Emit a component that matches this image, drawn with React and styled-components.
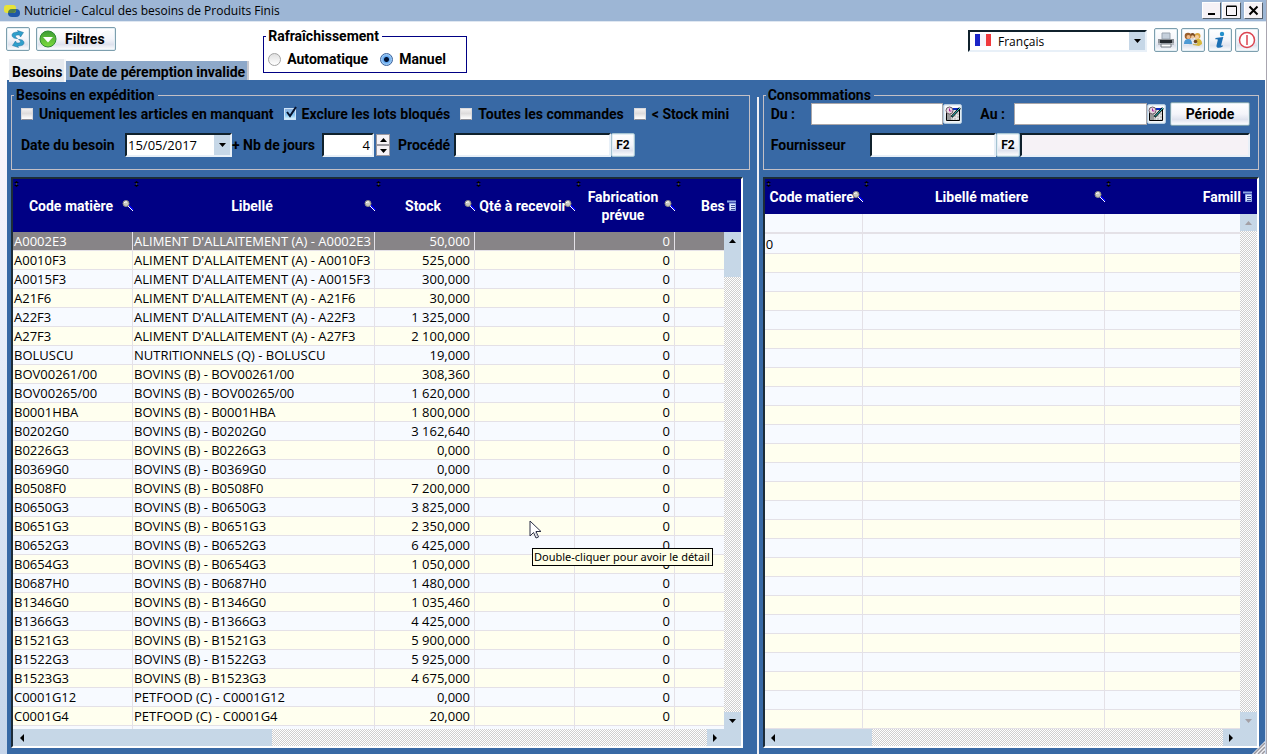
import React from "react";
import styled, { createGlobalStyle, css } from "styled-components";

const blue = "#3869a5";
const navy = "#000084";
const face = "#c6d7e7";

const Global = createGlobalStyle`
  *, *::before, *::after { box-sizing: border-box; }
  body { margin: 0; background: #fff; overflow: hidden; }
  body, button, input, select { font-family: "Open Sans", "Noto Sans", sans-serif; font-size: 13px; color: #000; }
`;

const strong = css`
  font-family: Roboto, "Liberation Sans", sans-serif;
  font-weight: 700;
  font-size: 14px;
  line-height: 16px;
`;

const Window = styled.div`
  height: 100vh;
  min-height: 400px;
  display: flex;
  flex-direction: column;
  border-right: 1px solid #a9a6b0;
  background: linear-gradient(#fff 60px, #f8f4fb 160px, #e8eefa 320px, #c6d5ea);
`;
const TitleBar = styled.header`
  height: 22px;
  flex: none;
  display: flex;
  align-items: center;
  gap: 4px;
  padding: 0 3px 0 4px;
  background: #9db6d5;
  border-bottom: 1px solid #dfe7f1;
`;
const Title = styled.h1`
  flex: 1;
  margin: 0;
  font-weight: 400;
  font-size: 12px;
  line-height: 16px;
`;
const WindowButtons = styled.div`
  display: flex;
  gap: 1px;
`;
const WindowButton = styled.button`
  width: 19px;
  height: 17px;
  padding: 0;
  display: grid;
  place-items: center;
  background: #f6f2f6;
  border: 1px solid;
  border-color: #fff #55606c #55606c #fff;
  margin-left: ${(p) => (p.$apart ? "2px" : "0")};
`;
const Toolbar = styled.div`
  height: 58px;
  flex: none;
  display: flex;
  background: #fff;
  padding: 0 7px 0 6px;
  z-index: 1;
`;
const ToolbarStart = styled.div`
  display: flex;
  flex-direction: column;
  justify-content: space-between;
  padding-top: 5px;
`;
const Buttons = styled.div`
  display: flex;
  gap: ${(p) => p.$gap || 6}px;
`;
const Button = styled.button`
  ${strong}
  height: 24px;
  width: ${(p) => p.$width || 24}px;
  flex: none;
  padding: 0;
  display: flex;
  align-items: center;
  justify-content: center;
  border: 1px solid #7d9fae;
  border-radius: 2px;
  background: linear-gradient(#fff, #f4f5fa 50%, #dfe3ee 75%, #fff);
  box-shadow: inset 0 0 0 1px #e3eef4;
`;
const FilterButton = styled(Button)`
  justify-content: flex-start;
  padding-left: 2px;
  gap: 8px;
`;
const PeriodButton = styled(Button)`
  margin-left: 4px;
`;
const KeyButton = styled(Button)`
  font-size: 12px;
  border-color: #a5c3d2;
`;
const CalendarButton = styled(Button)`
  width: 19px;
  height: 20px;
  border-color: #b5cbe0;
`;
const Tabs = styled.div`
  display: flex;
  align-items: flex-end;
  padding-left: 3px;
`;
const Tab = styled.button`
  ${strong}
  height: ${(p) => (p.$active ? 23 : 19)}px;
  margin-bottom: ${(p) => (p.$active ? "-2px" : "0")};
  padding: 2px 2px 0 3px;
  white-space: nowrap;
  border: 0;
  border-right: 2px solid ${(p) => (p.$active ? "#f7f9fb" : "#c9c9cf")};
  background: ${(p) => (p.$active ? "#e6eaef" : "#8da8c9")};
`;
const Group = styled.fieldset`
  margin: 0;
  min-width: 0;
  padding: 0 ${(p) => p.$end || 8}px 12px ${(p) => p.$start || 9}px;
  border: 1px solid #c3c0c6;
`;
const RefreshGroup = styled(Group)`
  width: 204px;
  height: 45px;
  margin: 6px 0 0 14px;
  padding: 0 4px;
  border-color: ${navy};
`;
const Legend = styled.legend`
  ${strong}
  padding: 0 3px 0 2px;
  margin-left: ${(p) => p.$shift || 0}px;
`;
const Choices = styled.div`
  display: flex;
  align-items: center;
  height: ${(p) => p.$height || 22}px;
  gap: ${(p) => p.$gap || 10}px;
`;
const Choice = styled.label`
  ${strong}
  display: flex;
  align-items: center;
  gap: 6px;
  white-space: nowrap;
`;
const Radio = styled.input.attrs({ type: "radio" })`
  appearance: none;
  margin: 0;
  width: 13px;
  height: 13px;
  border-radius: 50%;
  border: 1px solid #a3a3a3;
  background: linear-gradient(#e0e0e0, #fff);
  &:checked {
    border-color: #39609a;
    background: radial-gradient(circle, #001030 0 2px, #5fa5ee 3px, #b9dcfb 6px);
  }
`;
const Check = styled.input.attrs({ type: "checkbox" })`
  appearance: none;
  margin: 0;
  width: 12px;
  height: 12px;
  border: 1px solid #d9d9dc;
  border-bottom-color: #8d8f98;
  background: linear-gradient(#f2f0f0, #dedcdc 45%, #fff);
  &:checked {
    border-color: #cfe4f8;
    background: linear-gradient(#8fb2dd, #86c6f4 60%, #d8f2fc);
  }
`;
const CheckCell = styled.span`
  display: grid;
  width: 12px;
  > * { grid-area: 1 / 1; }
  > svg { pointer-events: none; margin-top: -2px; }
`;
const Spacer = styled.div`
  flex: 1;
`;
const ToolbarEnd = styled.div`
  display: flex;
  align-items: flex-end;
  gap: 7px;
  height: 30px;
`;
const Combo = styled.div`
  display: grid;
  grid-template-columns: auto 1fr 16px;
  align-items: center;
  width: ${(p) => p.$width}px;
  height: ${(p) => p.$height || 24}px;
  flex: none;
  background: #fff;
  border: 2px solid;
  border-color: #10212c #e8f0f8 #e8f0f8 #10212c;
`;
const ComboSelect = styled.select`
  grid-area: 1 / 1 / 2 / 4;
  appearance: none;
  width: 100%;
  height: 100%;
  border: 0;
  padding: 0 0 0 ${(p) => p.$indent || 1}px;
  background: transparent;
  font-size: ${(p) => p.$size || 13}px;
`;
const ComboFlag = styled.span`
  grid-area: 1 / 1;
  display: flex;
  padding: 0 0 2px 5px;
`;
const ComboArrow = styled.span`
  grid-area: 1 / 3;
  height: 100%;
  display: grid;
  place-items: center;
  background: ${face};
  pointer-events: none;
`;
const Panel = styled.main`
  flex: 1;
  min-height: 0;
  margin: 0 1px 0 7px;
  display: grid;
  grid-template-columns: minmax(0, 59fr) minmax(0, 40fr);
  grid-template-rows: minmax(0, 1fr);
  background: ${blue};
  position: relative;
`;
const Pane = styled.section`
  display: flex;
  flex-direction: column;
  gap: 7px;
  min-height: 0;
  padding: 7px 7px 6px 4px;
`;
const EndPane = styled(Pane)`
  margin-top: 17px;
  padding: 0 6px 6px 4px;
  border-left: 2px solid #f0f0f4;
  > fieldset { margin-top: -10px; }
`;
const Line = styled.div`
  display: flex;
  align-items: center;
  height: ${(p) => p.$height || 24}px;
  margin-top: ${(p) => p.$top || 0}px;
`;
const FieldLabel = styled.label`
  ${strong}
  flex: none;
  width: ${(p) => p.$width}px;
  padding-left: ${(p) => p.$indent || 0}px;
  white-space: nowrap;
`;
const Field = styled.input`
  min-width: 0;
  height: 24px;
  width: ${(p) => p.$width}px;
  flex: ${(p) => (p.$grow ? `${p.$grow} 1 0` : "none")};
  padding: 0 2px;
  background: ${(p) => (p.readOnly ? "#f6f2f6" : "#fff")};
  border: 2px solid;
  border-color: #10212c #e8f0f8 #e8f0f8 #10212c;
  text-align: ${(p) => (p.$end ? "right" : "left")};
`;
const DateField = styled(Field)`
  height: 22px;
  border: 1px solid #a9a6a9;
`;
const Spin = styled.div`
  display: grid;
  grid-template-rows: 11px 11px;
  width: 14px;
  margin: 0 8px 0 2px;
`;
const SpinButton = styled.button`
  padding: 0;
  display: grid;
  place-items: center;
  background: #f6f2f6;
  border: 1px solid #9b98a0;
`;
const Frame = styled.div`
  flex: 1;
  min-height: 0;
  position: relative;
  display: grid;
  grid-template-columns: minmax(0, 1fr) 17px;
  grid-template-rows: ${(p) => p.$head}px minmax(0, 1fr) 17px;
  margin-right: ${(p) => p.$end || 0}px;
  background: ${face};
  border: 2px solid;
  border-color: #1c2c38 #fff #fff #1c2c38;
`;
const TableClip = styled.div`
  grid-area: 1 / 1 / 3 / 3;
  overflow: hidden;
  background: #f7faff;
`;
const Table = styled.table`
  width: 100%;
  table-layout: fixed;
  border-collapse: separate;
  border-spacing: 0;
`;
const Th = styled.th`
  ${strong}
  line-height: 18px;
  position: relative;
  height: ${(p) => p.$height}px;
  padding: 0 4px 0 0;
  background: ${navy};
  color: #fff;
  text-align: center;
  white-space: ${(p) => (p.$wrap ? "normal" : "nowrap")};
`;
const SortMark = styled.svg`
  position: absolute;
  left: 1px;
  top: 2px;
`;
const SearchMark = styled.svg`
  position: absolute;
  right: -1px;
  top: 50%;
  margin-top: -6px;
  z-index: 1;
`;
const MenuHead = styled.span`
  display: flex;
  justify-content: flex-end;
  align-items: center;
  gap: 2px;
`;
const Row = styled.tr`
  background: ${(p) => (p.$selected ? "#878487" : p.$cream ? "#ffffef" : "#f7faff")};
  color: ${(p) => (p.$selected ? "#fff" : "#000")};
`;
const Td = styled.td`
  height: ${(p) => p.$height || 19}px;
  line-height: 18px;
  padding: 0 4px 0 1px;
  border-right: 1px solid #e4e1e7;
  border-bottom: ${(p) => p.$rule || 1}px solid #e4e1e7;
  text-align: ${(p) => (p.$end ? "right" : "left")};
  white-space: pre;
  overflow: hidden;
`;
const Bar = styled.div`
  grid-area: ${(p) => (p.$across ? "3 / 1" : "2 / 2")};
  z-index: 1;
  display: flex;
  flex-direction: ${(p) => (p.$across ? "row" : "column")};
  background: repeating-conic-gradient(#cfcfcf 0 25%, #fff 0 50%) 0 0 / 2px 2px;
`;
const BarButton = styled.button`
  width: 17px;
  height: 17px;
  flex: none;
  padding: 0;
  border: 0;
  display: grid;
  place-items: center;
  background: ${face};
`;
const Thumb = styled.div`
  flex: none;
  background: ${face};
  ${(p) => (p.$across ? "width" : "height")}: ${(p) => p.$length};
`;
const Tooltip = styled.div`
  position: absolute;
  left: 519px;
  top: 369px;
  z-index: 3;
  padding: 0 2px 0 1px;
  border: 1px solid #000;
  background: #ffffe7;
  font-family: "Noto Sans", sans-serif;
  font-size: 11px;
  line-height: 16px;
  white-space: nowrap;
`;
const Pointer = styled.svg`
  position: absolute;
  left: 516px;
  top: 341px;
  z-index: 3;
`;
const Grip = styled.svg`
  position: absolute;
  right: 0;
  bottom: 0;
`;

const arrows = { up: "M0 4h7L3.5 0z", down: "M0 0h7L3.5 4z", left: "M4 0v8L0 4z", right: "M0 0v8l4-4z" };
const Arrow = ({ dir, color = "#000" }) => {
  const side = dir === "left" || dir === "right";
  return (
    <svg width={side ? 4 : 7} height={side ? 8 : 4} aria-hidden="true">
      <path d={arrows[dir]} fill={color} />
    </svg>
  );
};

const Sort = () => (
  <SortMark width="5" height="6" viewBox="0 0 5 6" aria-hidden="true">
    <path d="M0 2h5L2.5 0zM0 4h5L2.5 6z" fill="#000" />
    <path d="M2 2h1v2h-1z" fill="#44483a" />
  </SortMark>
);
const Search = () => (
  <SearchMark width="12" height="11" viewBox="0 0 12 11" aria-hidden="true">
    <path d="M6 5l5 5" stroke="#0000ff" strokeWidth="2" />
    <path d="M6 6l5 5" stroke="#fff" strokeWidth="1" />
    <circle cx="4" cy="3.5" r="3" fill="#c8c8c0" stroke="#8c8c84" />
    <path d="M2 3l1-1h2" stroke="#fff" fill="none" />
  </SearchMark>
);
const MenuIcon = () => (
  <svg width="10" height="12" viewBox="0 0 10 12" aria-hidden="true">
    <path d="M0 .5h9v2H0z" fill="#8fa8e4" />
    <path d="M2.5 3.5h6v7h-6z" fill="#dce6ff" stroke="#8fa8e4" />
    <path d="M4 5.5h4M4 7.5h4M4 9.5h4" stroke="#3c4c94" />
  </svg>
);
const CalendarIcon = () => (
  <svg width="16" height="16" viewBox="0 0 16 16" aria-hidden="true">
    <path d="M1.5 6v8.500h13V2" fill="#e4e4e4" stroke="#000" />
    <path d="M2 8h4v6H2z" fill="#9a9a9a" />
    <path d="M7 9v5M10 9v5M13 7v7" stroke="#aaa" strokeDasharray="2 1" />
    <path d="M7 2h8v2H7z" fill="#0a2ac0" />
    <circle cx="4.500" cy="4.500" r="3.500" fill="#e8d8e0" stroke="#6b5c66" />
    <path d="M4.500 2.500v2.500h2" stroke="#b020a0" fill="none" />
    <path d="M15 2L6.500 11" stroke="#000" strokeWidth="2.500" />
    <path d="M15 2L7 10.500" stroke="#3de0e0" strokeWidth="1" />
  </svg>
);
const Logo = () => (
  <svg width="16" height="14" viewBox="0 0 16 14" aria-hidden="true">
    <rect x="4" y="5" width="12" height="8" rx="4" fill="#1f57a8" />
    <rect x="0" y="1" width="12" height="8" rx="3" fill="#e8e337" />
    <path d="M4 9c0-2 1-4 4-4h4v1c0 2-1 3-3 3z" fill="#4f7d4c" />
  </svg>
);
const RefreshIcon = () => (
  <svg width="16" height="18" viewBox="0 0 16 18" aria-hidden="true">
    <g fill="#2f9fcb" stroke="#1b6f9f" strokeWidth=".5">
      <path d="M7.500 8.500C4.500 8.800 2 7.500 2 5.300 2 3 4.500 2 8.300 2L7.500.5 13.500 2.500 10.500 7 9.500 5C7 4.800 5.500 5.200 5.500 6.300c0 1 .8 1.700 2 2.200z" />
      <path d="M8.500 9.500C11.500 9.200 14 10.500 14 12.700 14 15 11.500 16 7.700 16l.8 1.500L2.500 15.500 5.500 11l1 2c2.500.2 4-.2 4-1.300 0-1-.8-1.700-2-2.200z" />
    </g>
  </svg>
);
const FilterIcon = () => (
  <svg width="18" height="18" viewBox="0 0 18 18" aria-hidden="true">
    <defs>
      <linearGradient id="green" x2="0" y2="1">
        <stop stopColor="#3c9c34" /><stop offset="1" stopColor="#7ddc3c" />
      </linearGradient>
    </defs>
    <circle cx="9" cy="9" r="8" fill="url(#green)" stroke="#2f8a35" />
    <path d="M4 7h10L9 12.500z" fill="#fff" />
  </svg>
);
const Flag = () => (
  <svg width="16" height="12" viewBox="0 0 16 12" aria-hidden="true">
    <path d="M0 0h5v12H0z" fill="#1b25c8" />
    <path d="M5 0h6v12H5z" fill="#f6f4fa" />
    <path d="M11 0h5v12h-5z" fill="#f0393c" />
  </svg>
);
const PrinterIcon = () => (
  <svg width="18" height="18" viewBox="0 0 18 18" aria-hidden="true">
    <path d="M5 2h8v6H5z" fill="#c6d0dc" stroke="#9aa4b0" />
    <path d="M1 8h16v5H1z" fill="#8d9197" />
    <path d="M3 9h12v3H3z" fill="#24282d" />
    <path d="M1 12h16v2H1z" fill="#b8bcc2" />
    <path d="M4 13h10v3H4z" fill="#fff" stroke="#777c84" />
  </svg>
);
const PeopleIcon = () => (
  <svg width="20" height="18" viewBox="0 0 20 18" aria-hidden="true">
    <circle cx="14.500" cy="5" r="3" fill="#d9a640" />
    <circle cx="14" cy="6" r="2" fill="#f5cfa0" />
    <path d="M10 14c0-4 2-6 5-6s4 2 4 5l-3 2z" fill="#d8b83c" />
    <circle cx="9.500" cy="4.500" r="2.500" fill="#7a4a22" />
    <circle cx="9.500" cy="6" r="1.800" fill="#efc598" />
    <path d="M6 13c0-4 1-5 4-5s4 2 4 5z" fill="#e9ecf2" stroke="#a8b0bc" strokeWidth=".5" />
    <circle cx="5" cy="5" r="3.300" fill="#9a5f2c" />
    <circle cx="5.500" cy="6" r="2" fill="#f0b888" />
    <path d="M1 13c0-4 2-5 4.500-5S9 10 9 13z" fill="#4d9ad4" />
    <circle cx="12.500" cy="10.500" r="1.800" fill="#70441f" />
  </svg>
);
const InfoIcon = () => (
  <svg width="12" height="18" viewBox="0 0 12 18" aria-hidden="true">
    <circle cx="8" cy="3" r="2.200" fill="#2490cc" />
    <path d="M1.500 7L9.300 6 7.200 14c-.2.800.3.900 1.600.2L8.500 15.700C6 17.200 1.800 17.500 2.500 14.500L3.800 9c.1-.6-.5-.9-2.500-.7z" fill="#1c6fb4" />
  </svg>
);
const PowerIcon = () => (
  <svg width="18" height="18" viewBox="0 0 18 18" aria-hidden="true">
    <circle cx="9" cy="9" r="7.500" fill="#fff" stroke="#dc4450" strokeWidth="1.500" />
    <path d="M9 4v10" stroke="#dc4450" strokeWidth="1.500" />
  </svg>
);
const CheckMark = () => (
  <svg width="13" height="13" viewBox="0 0 13 13" aria-hidden="true">
    <path d="M3 6l3 4 6-9" fill="none" stroke="#04102a" strokeWidth="2" />
  </svg>
);

const rows = [
  ["A0002E3", "ALIMENT D'ALLAITEMENT (A)", "50,000"],
  ["A0010F3", "ALIMENT D'ALLAITEMENT (A)", "525,000"],
  ["A0015F3", "ALIMENT D'ALLAITEMENT (A)", "300,000"],
  ["A21F6", "ALIMENT D'ALLAITEMENT (A)", "30,000"],
  ["A22F3", "ALIMENT D'ALLAITEMENT (A)", "1 325,000"],
  ["A27F3", "ALIMENT D'ALLAITEMENT (A)", "2 100,000"],
  ["BOLUSCU", "NUTRITIONNELS (Q)", "19,000"],
  ["BOV00261/00", "BOVINS (B)", "308,360"],
  ["BOV00265/00", "BOVINS (B)", "1 620,000"],
  ["B0001HBA", "BOVINS (B)", "1 800,000"],
  ["B0202G0", "BOVINS (B)", "3 162,640"],
  ["B0226G3", "BOVINS (B)", "0,000"],
  ["B0369G0", "BOVINS (B)", "0,000"],
  ["B0508F0", "BOVINS (B)", "7 200,000"],
  ["B0650G3", "BOVINS (B)", "3 825,000"],
  ["B0651G3", "BOVINS (B)", "2 350,000"],
  ["B0652G3", "BOVINS (B)", "6 425,000"],
  ["B0654G3", "BOVINS (B)", "1 050,000"],
  ["B0687H0", "BOVINS (B)", "1 480,000"],
  ["B1346G0", "BOVINS (B)", "1 035,460"],
  ["B1366G3", "BOVINS (B)", "4 425,000"],
  ["B1521G3", "BOVINS (B)", "5 900,000"],
  ["B1522G3", "BOVINS (B)", "5 925,000"],
  ["B1523G3", "BOVINS (B)", "4 675,000"],
  ["C0001G12", "PETFOOD (C)", "0,000"],
  ["C0001G4", "PETFOOD (C)", "20,000"],
];
const emptyRows = Array.from({ length: 25 }, (_, i) => i);

const ScrollBars = ({ thumb, across, idle }) => (
  <>
    <Bar>
      <BarButton aria-label="Monter"><Arrow dir="up" color={idle ? "#a3a0a6" : "#000"} /></BarButton>
      {thumb && <Thumb $length={thumb} />}
      <Spacer />
      <BarButton aria-label="Descendre"><Arrow dir="down" color={idle ? "#a3a0a6" : "#000"} /></BarButton>
    </Bar>
    <Bar $across>
      <BarButton aria-label="Gauche"><Arrow dir="left" /></BarButton>
      <Thumb $across $length={across} />
      <Spacer />
      <BarButton aria-label="Droite"><Arrow dir="right" /></BarButton>
    </Bar>
  </>
);

const NeedsTable = () => (
  <Frame $head={53} $end={7}>
    <TableClip>
      <Table>
        <colgroup>
          <col width="120" /><col width="242" /><col width="100" /><col width="100" /><col width="100" /><col />
        </colgroup>
        <thead>
          <tr>
            {["Code matière", "Libellé", "Stock", "Qté à recevoir", "Fabrication prévue"].map((name) => (
              <Th key={name} $height={53} $wrap={name.startsWith("Fab")}><Sort />{name}<Search /></Th>
            ))}
            <Th $height={53}><Sort /><MenuHead>Bes<MenuIcon /></MenuHead></Th>
          </tr>
        </thead>
        <tbody>
          {rows.map(([code, family, stock], i) => (
            <Row key={code} $selected={i === 0} $cream={i % 2 === 1}>
              <Td>{code}</Td>
              <Td>{`${family} - ${code}`}</Td>
              <Td $end>{stock}</Td>
              <Td />
              <Td $end>0</Td>
              <Td />
            </Row>
          ))}
          <Row><Td /><Td /><Td /><Td /><Td /><Td /></Row>
        </tbody>
      </Table>
    </TableClip>
    <ScrollBars thumb="28px" across="34%" />
    <Pointer width="13" height="20" viewBox="0 0 13 20" aria-hidden="true">
      <path d="M1 1v15l3.500-3.500L7 18l2.500-1-2.500-5.500h5z" fill="#fff" stroke="#2a2f45" />
      <path d="M6 12l2.500 5" stroke="#b8bccb" />
    </Pointer>
    <Tooltip role="tooltip">Double-cliquer pour avoir le détail</Tooltip>
  </Frame>
);

const UsageTable = () => (
  <Frame $head={35}>
    <TableClip>
      <Table>
        <colgroup><col width="98" /><col width="242" /><col /></colgroup>
        <thead>
          <tr>
            <Th $height={35}><Sort />Code matiere<Search /></Th>
            <Th $height={35}><Sort />Libellé matiere<Search /></Th>
            <Th $height={35}><Sort /><MenuHead>Famill<MenuIcon /></MenuHead></Th>
          </tr>
        </thead>
        <tbody>
          <Row><Td $height={20} $rule={2} /><Td $height={20} $rule={2} /><Td $height={20} $rule={2} /></Row>
          <Row><Td $height={20}>0</Td><Td $height={20} /><Td $height={20} /></Row>
          {emptyRows.map((i) => (
            <Row key={i} $cream={i % 2 === 0}><Td /><Td /><Td /></Row>
          ))}
        </tbody>
      </Table>
    </TableClip>
    <ScrollBars across="19%" idle />
  </Frame>
);

export default function App() {
  return (
    <Window>
      <Global />
      <TitleBar>
        <Logo />
        <Title>Nutriciel - Calcul des besoins de Produits Finis</Title>
        <WindowButtons>
          <WindowButton aria-label="Réduire">
            <svg width="11" height="11"><path d="M2 9h7" stroke="#000" strokeWidth="2" /></svg>
          </WindowButton>
          <WindowButton aria-label="Agrandir">
            <svg width="11" height="11"><path d="M.5 1.500h10v9H.5zM.5 1h10" fill="none" stroke="#000" /></svg>
          </WindowButton>
          <WindowButton aria-label="Fermer" $apart>
            <svg width="11" height="11"><path d="M1.500 1.500l8 8M9.500 1.500l-8 8" stroke="#000" strokeWidth="2" /></svg>
          </WindowButton>
        </WindowButtons>
      </TitleBar>

      <Toolbar>
        <ToolbarStart>
          <Buttons>
            <Button aria-label="Actualiser"><RefreshIcon /></Button>
            <FilterButton $width={80}><FilterIcon />Filtres</FilterButton>
          </Buttons>
          <Tabs role="tablist">
            <Tab role="tab" aria-selected="true" $active>Besoins</Tab>
            <Tab role="tab" aria-selected="false">Date de péremption invalide</Tab>
          </Tabs>
        </ToolbarStart>
        <RefreshGroup>
          <Legend $shift={-2}>Rafraîchissement</Legend>
          <Choices $height={30} $gap={12}>
            <Choice><Radio name="refresh" value="auto" />Automatique</Choice>
            <Choice><Radio name="refresh" value="manual" defaultChecked />Manuel</Choice>
          </Choices>
        </RefreshGroup>
        <Spacer />
        <ToolbarEnd>
          <Combo $width={179} $height={22}>
            <ComboSelect aria-label="Langue" $indent={28} $size={12}><option>Français</option></ComboSelect>
            <ComboFlag><Flag /></ComboFlag>
            <ComboArrow><Arrow dir="down" /></ComboArrow>
          </Combo>
          <Buttons $gap={3}>
            <Button aria-label="Imprimer"><PrinterIcon /></Button>
            <Button aria-label="Utilisateurs"><PeopleIcon /></Button>
            <Button aria-label="Informations"><InfoIcon /></Button>
            <Button aria-label="Quitter"><PowerIcon /></Button>
          </Buttons>
        </ToolbarEnd>
      </Toolbar>

      <Panel>
        <Pane>
          <Group>
            <Legend $shift={-7}>Besoins en expédition</Legend>
            <Choices>
              <Choice><Check />Uniquement les articles en manquant</Choice>
              <Choice>
                <CheckCell><Check defaultChecked /><CheckMark /></CheckCell>
                Exclure les lots bloqués
              </Choice>
              <Choice><Check />Toutes les commandes</Choice>
              <Choice><Check />&lt; Stock mini</Choice>
            </Choices>
            <Line $top={8}>
              <FieldLabel htmlFor="need" $width={104}>Date du besoin</FieldLabel>
              <Combo $width={107}>
                <ComboSelect id="need"><option>15/05/2017</option></ComboSelect>
                <ComboArrow><Arrow dir="down" /></ComboArrow>
              </Combo>
              <FieldLabel htmlFor="days" $width={90}>+ Nb de jours</FieldLabel>
              <Field id="days" defaultValue="4" $width={52} $end />
              <Spin>
                <SpinButton aria-label="Plus"><Arrow dir="up" /></SpinButton>
                <SpinButton aria-label="Moins"><Arrow dir="down" /></SpinButton>
              </Spin>
              <FieldLabel htmlFor="process" $width={56}>Procédé</FieldLabel>
              <Field id="process" $width={157} />
              <KeyButton>F2</KeyButton>
            </Line>
          </Group>
          <NeedsTable />
        </Pane>

        <EndPane>
          <Group $start={7}>
            <Legend $shift={-5}>Consommations</Legend>
            <Line $height={22}>
              <FieldLabel htmlFor="from" $width={40}>Du :</FieldLabel>
              <DateField id="from" $grow={1} />
              <CalendarButton aria-label="Choisir la date de début"><CalendarIcon /></CalendarButton>
              <FieldLabel htmlFor="to" $width={52} $indent={18}>Au :</FieldLabel>
              <DateField id="to" $grow={1} />
              <CalendarButton aria-label="Choisir la date de fin"><CalendarIcon /></CalendarButton>
              <PeriodButton $width={80}>Période</PeriodButton>
            </Line>
            <Line $top={8}>
              <FieldLabel htmlFor="supplier" $width={99}>Fournisseur</FieldLabel>
              <Field id="supplier" $grow={123} />
              <KeyButton>F2</KeyButton>
              <Field readOnly aria-label="Nom du fournisseur" $grow={231} />
            </Line>
          </Group>
          <UsageTable />
        </EndPane>
        <Grip width="13" height="13" viewBox="0 0 13 13" aria-hidden="true">
          <path d="M0 13L13 0v13z" fill="#f2f2f5" />
          <path d="M2 13L13 2M6 13l7-7M10 13l3-3" stroke="#9a98a0" strokeWidth="1.500" />
        </Grip>
      </Panel>
    </Window>
  );
}
